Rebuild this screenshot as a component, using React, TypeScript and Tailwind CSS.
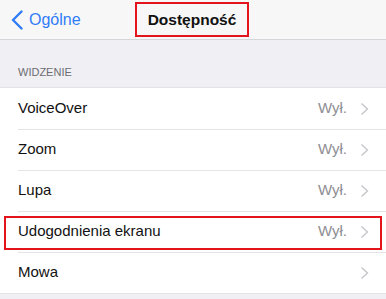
const rows = [
  { label: "VoiceOver", value: "Wył." },
  { label: "Zoom", value: "Wył." },
  { label: "Lupa", value: "Wył." },
  { label: "Udogodnienia ekranu", value: "Wył.", marked: true },
  { label: "Mowa", value: "" },
];

const Chevron = () => (
  <svg width="9" height="14" viewBox="0 0 9 14" className="ml-[13px] mr-[17px]">
    <path d="M1.5 1.5l6 5.5-6 5.5" fill="none" stroke="#c4c4c9" strokeWidth="1.3" />
  </svg>
);

const BackArrow = () => (
  <svg width="12" height="20" viewBox="0 0 12 20" className="ml-[11px]">
    <path d="M10.5 1.5L2 10l8.5 8.5" fill="none" stroke="#2f7cf6" strokeWidth="2.4" strokeLinecap="round" strokeLinejoin="round" />
  </svg>
);

const App = () => {
  return (
    <div
      className="w-[386px] h-[299px] overflow-hidden bg-[#efeff4] text-[#111]"
      style={{ fontFamily: "'Liberation Sans', Arial, sans-serif" }}
    >
      <div className="relative h-[40px] bg-[#f7f7f7] border-b border-[#d6d6da] flex items-center">
        <div className="flex items-center text-[#2f7cf6] text-[16px]">
          <BackArrow />
          <span className="ml-[6px]">Ogólne</span>
        </div>
        <div className="absolute left-[135px] top-[2px] w-[114px] h-[35px] border-2 border-[#e3141b] flex items-center justify-center text-[15.5px] font-bold">
          Dostępność
        </div>
      </div>
      <div className="h-[47px] flex items-end pl-[18px] pb-[7px] text-[11px] text-[#6d6d72]">
        WIDZENIE
      </div>
      <div className="bg-white border-t border-[#e3e3e7] border-b">
        {rows.map((r, i) => (
          <div key={r.label} className="relative h-[41px] flex items-center">
            {i > 0 && (
              <div className="absolute top-0 left-[18px] right-0 h-px bg-[#e4e4e8]" />
            )}
            <span className="pl-[18px] text-[15px] flex-1">{r.label}</span>
            <span className="text-[15px] text-[#8e8e93]">{r.value}</span>
            <Chevron />
            {r.marked && (
              <div className="absolute left-[4px] right-[4px] top-[5px] bottom-[2px] border-2 border-[#e3141b]" />
            )}
          </div>
        ))}
      </div>
    </div>
  );
};

export default App;
